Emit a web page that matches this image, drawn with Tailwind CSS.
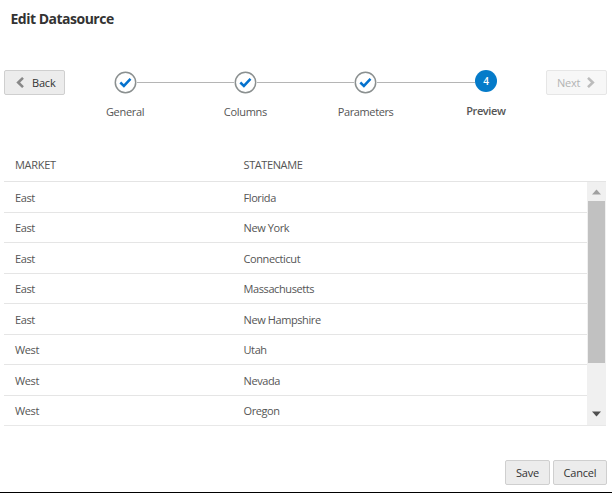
<!DOCTYPE html>
<html lang="en">
<head>
<meta charset="utf-8">
<title>Edit Datasource</title>
<script src="https://cdn.jsdelivr.net/npm/@tailwindcss/browser@4"></script>
</head>
<body class="h-[493px] w-[612px] overflow-hidden bg-white font-['Open_Sans','Noto_Sans',sans-serif] text-[11px] leading-4 tracking-[-0.4px] text-[#555]">
<div class="flex h-[493px] flex-col border-b border-black">
  <h1 class="h-[69px] pl-[10.5px] pt-[9px] text-[14px] leading-5 font-bold tracking-[-0.5px] text-[#333]">Edit Datasource</h1>

  <div class="flex h-[84px] items-start pl-1 pr-[5px]">
    <button class="mt-[1px] flex h-[25px] w-[61px] items-center rounded-xs border border-[#cfcfcf] bg-[#ececec] pl-[11px] pt-px tracking-[-0.2px] text-[#333]">
      <svg class="mr-[8px] -mt-[2px] h-[11px] w-2" viewBox="0 0 8 11" fill="none" stroke="#888" stroke-width="2.6"><path d="M7 .9 2.2 5.5 7 10.1"/></svg>
      <span>Back</span>
    </button>
    <ol class="grid flex-1 grid-cols-4">
      <li class="flex flex-col items-center">
        <div class="flex h-[26px] w-full items-center"><i class="flex-1"></i><svg class="size-[23px]" viewBox="0 0 23 23" fill="none"><circle cx="11.5" cy="11.5" r="10.2" stroke="#8b9090" stroke-width="1.5"/><path d="m6.3 11.5 3.6 3.4 6.6-7" stroke="#0572ce" stroke-width="2.5"/></svg><i class="h-px flex-1 bg-[#b5b5b5]"></i></div>
        <span class="mt-[9px] tracking-[-0.3px]">General</span>
      </li>
      <li class="flex flex-col items-center">
        <div class="flex h-[26px] w-full items-center"><i class="h-px flex-1 bg-[#b5b5b5]"></i><svg class="size-[23px]" viewBox="0 0 23 23" fill="none"><circle cx="11.5" cy="11.5" r="10.2" stroke="#8b9090" stroke-width="1.5"/><path d="m6.3 11.5 3.6 3.4 6.6-7" stroke="#0572ce" stroke-width="2.5"/></svg><i class="h-px flex-1 bg-[#b5b5b5]"></i></div>
        <span class="mt-[9px] tracking-[-0.3px]">Columns</span>
      </li>
      <li class="flex flex-col items-center">
        <div class="flex h-[26px] w-full items-center"><i class="h-px flex-1 bg-[#b5b5b5]"></i><svg class="size-[23px]" viewBox="0 0 23 23" fill="none"><circle cx="11.5" cy="11.5" r="10.2" stroke="#8b9090" stroke-width="1.5"/><path d="m6.3 11.5 3.6 3.4 6.6-7" stroke="#0572ce" stroke-width="2.5"/></svg><i class="h-px flex-1 bg-[#b5b5b5]"></i></div>
        <span class="mt-[9px]">Parameters</span>
      </li>
      <li class="flex flex-col items-center">
        <div class="flex h-[26px] w-full items-center"><i class="h-px flex-1 bg-[#b5b5b5]"></i><b class="mb-[3px] flex size-[22px] items-center justify-center rounded-full bg-[#057bc9] pt-px text-[10px] leading-none font-semibold text-white">4</b><i class="flex-1"></i></div>
        <span class="mt-2 font-semibold text-[#555]">Preview</span>
      </li>
    </ol>
    <button class="mt-[1px] flex h-[25px] w-[61px] items-center rounded-xs border border-[#e6e6e6] bg-[#f7f7f7] pl-[10px] pt-px tracking-[-0.2px] text-[#b3b3b3]">
      <span>Next</span>
      <svg class="ml-[7px] -mt-[2px] h-[11px] w-2" viewBox="0 0 8 11" fill="none" stroke="#bcbcbc" stroke-width="2.6"><path d="M1 .9 5.8 5.5 1 10.1"/></svg>
    </button>
  </div>

  <section class="ml-1 w-[602px]">
    <div class="grid h-[29px] grid-cols-[228.5px_1fr] border-b border-[#e4e4e4] pl-[11px] pt-1"><span class="tracking-[-0.3px]">MARKET</span><span>STATENAME</span></div>
    <div class="flex h-[244px] border-b border-[#e8e8e8]">
      <div class="grid flex-1 auto-rows-[30.55px] overflow-hidden">
        <div class="grid grid-cols-[228.5px_1fr] items-center border-b border-[#e5e5e5] pl-[11px] pt-[2px]"><span>East</span><span>Florida</span></div>
        <div class="grid grid-cols-[228.5px_1fr] items-center border-b border-[#e5e5e5] pl-[11px] pt-[2px]"><span>East</span><span>New York</span></div>
        <div class="grid grid-cols-[228.5px_1fr] items-center border-b border-[#e5e5e5] pl-[11px] pt-[2px]"><span>East</span><span>Connecticut</span></div>
        <div class="grid grid-cols-[228.5px_1fr] items-center border-b border-[#e5e5e5] pl-[11px] pt-[2px]"><span>East</span><span>Massachusetts</span></div>
        <div class="grid grid-cols-[228.5px_1fr] items-center border-b border-[#e5e5e5] pl-[11px] pt-[2px]"><span>East</span><span>New Hampshire</span></div>
        <div class="grid grid-cols-[228.5px_1fr] items-center border-b border-[#e5e5e5] pl-[11px] pt-px"><span>West</span><span>Utah</span></div>
        <div class="grid grid-cols-[228.5px_1fr] items-center border-b border-[#e5e5e5] pl-[11px] pt-px"><span>West</span><span>Nevada</span></div>
        <div class="grid grid-cols-[228.5px_1fr] items-center pl-[11px]"><span>West</span><span>Oregon</span></div>
      </div>
      <div class="flex w-[19px] flex-col items-center bg-[#f0f0f0]">
        <svg class="h-[19px] w-[19px]" viewBox="0 0 19 19" fill="#a0a0a0"><path d="M5 12.5 9.5 7.5 14 12.5z"/></svg>
        <div class="h-[162px] w-[17px] bg-[#c1c1c1]"></div>
        <svg class="mt-auto mb-[2px] h-[19px] w-[19px]" viewBox="0 0 19 19" fill="#505050"><path d="M5 7.5 14 7.5 9.5 12.5z"/></svg>
      </div>
    </div>
  </section>

  <footer class="mt-[34px] flex justify-end gap-[3px] pr-[5px] tracking-[-0.2px] text-[#333]">
    <button class="h-[25px] w-[45px] rounded-xs border border-[#cfcfcf] bg-[#ececec] pt-px">Save</button>
    <button class="h-[25px] w-[54px] rounded-xs border border-[#cfcfcf] bg-[#ececec] pt-px">Cancel</button>
  </footer>
</div>
</body>
</html>
